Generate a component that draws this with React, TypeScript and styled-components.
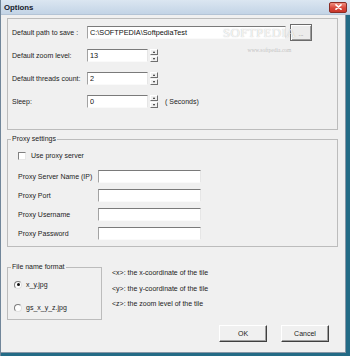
import React from 'react';
import styled, { createGlobalStyle } from 'styled-components';

const Global = createGlobalStyle`
  html, body { margin: 0; padding: 0; background: #236b86; }
  body { font-family: "Liberation Sans", Arial, sans-serif; font-size: 7px; color: #1c1c1c; }
  * { box-sizing: border-box; }
`;

const Window = styled.div`
  width: 350px;
  height: 356px;
  display: flex;
  flex-direction: column;
  border-left: 1px solid #71869a;
  background: #f0f0f0;
  position: relative;
  overflow: hidden;
`;

const TitleBar = styled.div`
  height: 15px;
  flex: none;
  display: flex;
  align-items: center;
  padding: 0 3px 0 3px;
  background: linear-gradient(#dbe6f1, #c3d4e6);
  border-bottom: 1px solid #b4c4d6;
`;

const Title = styled.span`
  font-weight: bold;
  font-size: 7.8px;
  color: #15202c;
`;

const CloseButton = styled.div`
  margin-left: auto;
  width: 18px;
  height: 11px;
  border-radius: 2px;
  border: 1px solid #8a2c24;
  background: linear-gradient(#f08f80, #d9473a 55%, #c8372b);
  display: flex;
  align-items: center;
  justify-content: center;
`;

const CloseGlyph = styled.svg`
  width: 7px;
  height: 6px;
  display: block;
`;

const Body = styled.div`
  flex: 1;
  display: flex;
  flex-direction: column;
  padding: 3px 8px 0 6px;
  border-right: 4px solid #236b86;
  border-bottom: 3px solid #236b86;
  box-shadow: inset -1px -1px 0 #8696a6;
`;

const Panel = styled.div`
  border: 1px solid #bcbcbc;
  height: 112px;
  padding: 5px 0 0 4px;
  display: grid;
  grid-template-columns: 75px auto;
  grid-auto-rows: 17px;
  row-gap: 6px;
  align-items: center;
`;

const Label = styled.span`
  white-space: nowrap;
`;

const Controls = styled.div`
  display: flex;
  align-items: center;
  gap: 2px;
`;

const TextBox = styled.input<{ $w: number }>`
  width: ${(p) => p.$w}px;
  height: 13px;
  margin: 0;
  padding: 0 2px;
  font: inherit;
  font-size: 7.3px;
  color: #111;
  background: #fff;
  border: 1px solid;
  border-color: #7a7a7a #e6e6e6 #fafafa #a3a3a3;
  outline: none;
`;

const BrowseButton = styled.div`
  width: 22px;
  height: 17px;
  margin-left: 2px;
  border: 1px solid #6b6b6b;
  background: #ececec;
  box-shadow: inset 1px 1px 0 #fff, inset -1px -1px 0 #9c9c9c;
  display: flex;
  align-items: flex-end;
  justify-content: center;
  padding-bottom: 3px;
  font-size: 6px;
  color: #777;
`;

const Spinner = styled.div`
  width: 8px;
  height: 13px;
  display: flex;
  flex-direction: column;
  gap: 1px;
`;

const SpinHalf = styled.div<{ $down?: boolean }>`
  flex: 1;
  background: #f0f0f0;
  border: 1px solid;
  border-color: #fff #6f6f6f #6f6f6f #fff;
  display: flex;
  align-items: center;
  justify-content: center;
  &::after {
    content: '';
    width: 0;
    height: 0;
    border-left: 1.5px solid transparent;
    border-right: 1.5px solid transparent;
    ${(p) => (p.$down ? 'border-top: 2px solid #222;' : 'border-bottom: 2px solid #222;')}
  }
`;

const Hint = styled.span`
  margin-left: 5px;
  white-space: nowrap;
`;

const Group = styled.fieldset<{ $w?: number }>`
  margin: 0;
  padding: 0;
  min-width: 0;
  border: 1px solid #bcbcbc;
  ${(p) => (p.$w ? `width: ${p.$w}px;` : '')}
`;

const Legend = styled.legend`
  margin-left: 3px;
  padding: 0 1px;
  line-height: 8px;
  font-size: 7px;
`;

const ProxyGroup = styled(Group)`
  margin-top: 5px;
`;

const ProxyContent = styled.div`
  padding: 8px 0 6px 10px;
  display: flex;
  flex-direction: column;
`;

const CheckRow = styled.label`
  display: flex;
  align-items: center;
  gap: 5px;
  height: 9px;
  margin-bottom: 10px;
`;

const CheckBox = styled.span`
  width: 8px;
  height: 8px;
  background: #fff;
  border: 1px solid;
  border-color: #808080 #e8e8e8 #e8e8e8 #808080;
`;

const ProxyGrid = styled.div`
  display: grid;
  grid-template-columns: 80px auto;
  grid-auto-rows: 13px;
  row-gap: 6px;
  align-items: center;
`;

const BottomRow = styled.div`
  display: flex;
  margin-top: 16px;
`;

const FileContent = styled.div`
  padding: 9px 0 7px 6px;
  display: flex;
  flex-direction: column;
  gap: 14px;
`;

const RadioRow = styled.label`
  display: flex;
  align-items: center;
  gap: 4px;
  height: 9px;
`;

const Radio = styled.span<{ $on?: boolean }>`
  width: 8px;
  height: 8px;
  border-radius: 50%;
  background: #fff;
  border: 1px solid;
  border-color: #7d7d7d #e0e0e0 #e0e0e0 #7d7d7d;
  display: flex;
  align-items: center;
  justify-content: center;
  &::after {
    content: '';
    width: 3px;
    height: 3px;
    border-radius: 50%;
    background: ${(p) => (p.$on ? '#111' : 'transparent')};
  }
`;

const Notes = styled.div`
  margin-left: 10px;
  padding-top: 6px;
  display: flex;
  flex-direction: column;
  gap: 7.5px;
  line-height: 8px;
`;

const ButtonRow = styled.div`
  display: flex;
  justify-content: flex-end;
  gap: 14px;
  margin-top: 5px;
  padding-right: 9px;
`;

const Button = styled.div`
  width: 48px;
  height: 17px;
  display: flex;
  align-items: center;
  justify-content: center;
  background: #f0f0f0;
  border: 1px solid;
  border-color: #fff #404040 #404040 #fff;
  box-shadow: inset -1px -1px 0 #a0a0a0;
  font-size: 7px;
`;

const Watermark = styled.div`
  position: absolute;
  left: 222px;
  top: 27px;
  display: flex;
  flex-direction: column;
  align-items: center;
  pointer-events: none;
`;

const WatermarkBig = styled.span`
  font-family: "Liberation Serif", "Times New Roman", serif;
  font-size: 13px;
  letter-spacing: 0.3px;
  color: rgba(255, 255, 255, 0.85);
  text-shadow: 0 0 1px rgba(120, 120, 120, 0.6);
  line-height: 12px;
`;

const WatermarkSmall = styled.span`
  font-family: "Liberation Serif", "Times New Roman", serif;
  font-size: 5.5px;
  color: rgba(170, 170, 170, 0.7);
  margin-top: 8px;
  margin-left: 20px;
`;

export default function App() {
  return (
    <>
      <Global />
      <Window>
        <TitleBar>
          <Title>Options</Title>
          <CloseButton>
            <CloseGlyph viewBox="0 0 7 6">
              <path d="M1 0.8 L6 5.2 M6 0.8 L1 5.2" stroke="#fff" strokeWidth="1.6" strokeLinecap="round" />
            </CloseGlyph>
          </CloseButton>
        </TitleBar>
        <Body>
          <Panel>
            <Label>Default path to save :</Label>
            <Controls>
              <TextBox $w={199} readOnly defaultValue="C:\SOFTPEDIA\SoftpediaTest" />
              <BrowseButton>...</BrowseButton>
            </Controls>
            <Label>Default zoom level:</Label>
            <Controls>
              <TextBox $w={61} readOnly defaultValue="13" />
              <Spinner>
                <SpinHalf />
                <SpinHalf $down />
              </Spinner>
            </Controls>
            <Label>Default threads count:</Label>
            <Controls>
              <TextBox $w={61} readOnly defaultValue="2" />
              <Spinner>
                <SpinHalf />
                <SpinHalf $down />
              </Spinner>
            </Controls>
            <Label>Sleep:</Label>
            <Controls>
              <TextBox $w={61} readOnly defaultValue="0" />
              <Spinner>
                <SpinHalf />
                <SpinHalf $down />
              </Spinner>
              <Hint>( Seconds)</Hint>
            </Controls>
          </Panel>

          <ProxyGroup>
            <Legend>Proxy settings</Legend>
            <ProxyContent>
              <CheckRow>
                <CheckBox />
                <span>Use proxy server</span>
              </CheckRow>
              <ProxyGrid>
                <Label>Proxy Server Name (IP)</Label>
                <TextBox $w={103} readOnly />
                <Label>Proxy Port</Label>
                <TextBox $w={103} readOnly />
                <Label>Proxy Username</Label>
                <TextBox $w={103} readOnly />
                <Label>Proxy Password</Label>
                <TextBox $w={103} readOnly />
              </ProxyGrid>
            </ProxyContent>
          </ProxyGroup>

          <BottomRow>
            <Group $w={95}>
              <Legend>File name format</Legend>
              <FileContent>
                <RadioRow>
                  <Radio $on />
                  <span>x_y.jpg</span>
                </RadioRow>
                <RadioRow>
                  <Radio />
                  <span>gs_x_y_z.jpg</span>
                </RadioRow>
              </FileContent>
            </Group>
            <Notes>
              <span>&lt;x&gt;: the x-coordinate of the tile</span>
              <span>&lt;y&gt;: the y-coordinate of the tile</span>
              <span>&lt;z&gt;: the zoom level of the tile</span>
            </Notes>
          </BottomRow>

          <ButtonRow>
            <Button>OK</Button>
            <Button>Cancel</Button>
          </ButtonRow>
        </Body>
        <Watermark>
          <WatermarkBig>SOFTPEDIA</WatermarkBig>
          <WatermarkSmall>www.softpedia.com</WatermarkSmall>
        </Watermark>
      </Window>
    </>
  );
}
